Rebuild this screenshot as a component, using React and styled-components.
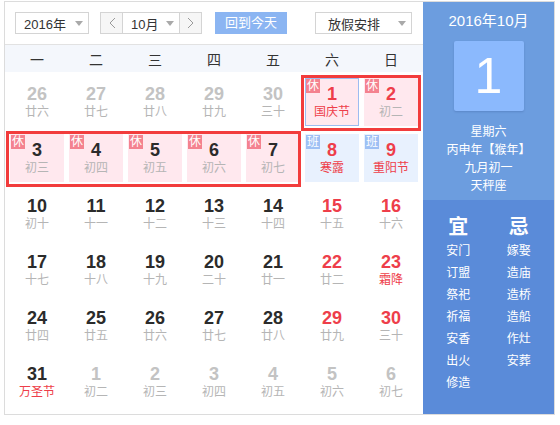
import React from 'react';
import styled, { createGlobalStyle } from 'styled-components';

const GlobalStyle = createGlobalStyle`
  html, body {
    margin: 0;
    padding: 0;
    background: #fff;
  }
  body {
    font-family: "Liberation Sans", "Noto Sans CJK SC", sans-serif;
  }
`;

const CJK = `"Liberation Sans", "Noto Sans CJK SC", sans-serif`;

const weekNames = ['一', '二', '三', '四', '五', '六', '日'];

const festivals = ['国庆节', '寒露', '重阳节', '霜降', '万圣节'];

// [day, lunar text, kind] kind: o = other month, rest = 休, work = 班
const days = [
  [26, '廿六', 'o'], [27, '廿七', 'o'], [28, '廿八', 'o'], [29, '廿九', 'o'], [30, '三十', 'o'], [1, '国庆节', 'rest'], [2, '初二', 'rest'],
  [3, '初三', 'rest'], [4, '初四', 'rest'], [5, '初五', 'rest'], [6, '初六', 'rest'], [7, '初七', 'rest'], [8, '寒露', 'work'], [9, '重阳节', 'work'],
  [10, '初十'], [11, '十一'], [12, '十二'], [13, '十三'], [14, '十四'], [15, '十五'], [16, '十六'],
  [17, '十七'], [18, '十八'], [19, '十九'], [20, '二十'], [21, '廿一'], [22, '廿二'], [23, '霜降'],
  [24, '廿四'], [25, '廿五'], [26, '廿六'], [27, '廿七'], [28, '廿八'], [29, '廿九'], [30, '三十'],
  [31, '万圣节'], [1, '初二', 'o'], [2, '初三', 'o'], [3, '初四', 'o'], [4, '初五', 'o'], [5, '初六', 'o'], [6, '初七', 'o'],
];

const frames = [
  { row: 1, from: 6, to: 8, right: -3 },
  { row: 2, from: 1, to: 6, right: -1 },
];

const suitable = ['安门', '订盟', '祭祀', '祈福', '安香', '出火', '修造'];
const avoid = ['嫁娶', '造庙', '造桥', '造船', '作灶', '安葬'];

const Widget = styled.div`
  margin: 1px 0 0 4px;
  width: 551px;
  height: 414px;
  box-sizing: border-box;
  border: 1px solid #dcdcdc;
  display: flex;
`;

const Main = styled.div`
  width: 418px;
  display: flex;
  flex-direction: column;
`;

const Toolbar = styled.div`
  height: 42px;
  border-bottom: 1px solid #e2e2e2;
  display: flex;
  align-items: center;
  padding-left: 10px;
`;

const Select = styled.div`
  width: ${(p) => p.$width}px;
  height: 22px;
  box-sizing: border-box;
  border: 1px solid #d4d4d4;
  margin-left: ${(p) => p.$gap || 0}px;
  padding: 0 5px 0 ${(p) => p.$pad || 8}px;
  display: flex;
  align-items: center;
  justify-content: space-between;
  font-family: ${CJK};
  font-size: 13px;
  color: #333;
  background: #fff;
`;

const Caret = styled.span`
  width: 0;
  height: 0;
  border-left: 4px solid transparent;
  border-right: 4px solid transparent;
  border-top: 5px solid #a9a9a9;
`;

const MonthGroup = styled.div`
  margin-left: 11px;
  height: 22px;
  box-sizing: border-box;
  border: 1px solid #d4d4d4;
  display: flex;
`;

const NavButton = styled.div`
  width: 21px;
  background: #f6f6f6;
  display: flex;
  align-items: center;
  justify-content: center;
`;

const MonthSelect = styled(Select)`
  height: 20px;
  border-width: 0 1px;
`;

const TodayButton = styled.div`
  margin-left: 13px;
  width: 72px;
  height: 22px;
  background: #8bb5f2;
  color: #fff;
  font-family: ${CJK};
  font-size: 13px;
  line-height: 22px;
  text-align: center;
`;

const WeekHeader = styled.div`
  height: 27px;
  background: #f4f7fc;
  display: grid;
  grid-template-columns: repeat(7, 54px);
  column-gap: 5px;
  padding: 0 5px;
  align-items: center;
  text-align: center;
  font-family: ${CJK};
  font-size: 14px;
  color: #333;
`;

const DayGrid = styled.div`
  display: grid;
  grid-template-columns: repeat(7, 54px);
  grid-auto-rows: 48px;
  column-gap: 5px;
  row-gap: 8px;
  padding: 6px 5px 8px;
`;

const cellBg = { rest: '#ffe8ee', work: '#e8f1fe' };
const badgeBg = { rest: '#f4828f', work: '#9ec0f4' };

const Cell = styled.div`
  position: relative;
  grid-row: ${(p) => p.$row};
  grid-column: ${(p) => p.$col};
  box-sizing: border-box;
  border: 1px solid ${(p) => (p.$selected ? '#9dbcf0' : 'transparent')};
  background: ${(p) => cellBg[p.$kind] || 'transparent'};
  padding-top: 5px;
  text-align: center;
`;

const DayNum = styled.div`
  font-family: "Liberation Sans", Arial, sans-serif;
  font-weight: bold;
  font-size: 18px;
  line-height: 20px;
  color: ${(p) => p.$color};
`;

const Lunar = styled.div`
  font-family: ${CJK};
  font-size: 12px;
  line-height: 16px;
  color: ${(p) => (p.$festival ? '#ee3e4a' : '#b5b5b5')};
`;

const Badge = styled.span`
  position: absolute;
  top: 0;
  left: 0;
  width: 14px;
  height: 14px;
  background: ${(p) => badgeBg[p.$kind]};
  color: #fff;
  font-family: ${CJK};
  font-size: 12px;
  line-height: 14px;
  text-align: center;
`;

const HolidayFrame = styled.div`
  grid-row: ${(p) => p.$row};
  grid-column: ${(p) => p.$from} / ${(p) => p.$to};
  margin: -3px ${(p) => p.$right}px -5px -4px;
  border: 3px solid #f23c3c;
  z-index: 2;
  pointer-events: none;
`;

const Panel = styled.div`
  width: 131px;
  display: flex;
  flex-direction: column;
  color: #fff;
  font-family: ${CJK};
`;

const PanelTop = styled.div`
  background: #6c9ddf;
  padding: 8px 0 5px;
  text-align: center;
`;

const MonthTitle = styled.div`
  font-size: 15px;
  line-height: 22px;
`;

const TodayBox = styled.div`
  width: 70px;
  height: 70px;
  margin: 9px auto 12px;
  background: #8bb9fd;
  border-radius: 2px;
  box-shadow: 0 1px 2px rgba(40, 70, 130, 0.25);
  font-family: "Liberation Sans", Arial, sans-serif;
  font-size: 50px;
  line-height: 70px;
`;

const InfoLine = styled.div`
  font-size: 12px;
  line-height: 18px;
`;

const PanelBottom = styled.div`
  flex: 1;
  background: #5a8bd9;
  display: grid;
  grid-template-columns: 1fr 1fr;
  align-content: start;
  padding: 14px 5px 0;
`;

const AdviceColumn = styled.div`
  text-align: center;
`;

const AdviceHead = styled.div`
  font-size: 20px;
  font-weight: bold;
  line-height: 26px;
`;

const AdviceItem = styled.div`
  font-size: 12px;
  line-height: 22px;
`;

const Chevron = ({ dir }) => (
  <svg width="8" height="12" viewBox="0 0 8 12">
    <polyline
      points={dir === 'left' ? '7,1 2,6 7,11' : '1,1 6,6 1,11'}
      fill="none"
      stroke="#9a9a9a"
      strokeWidth="1"
    />
  </svg>
);

const numColor = (kind, weekend) => {
  if (kind === 'o') return '#c3c3c3';
  if (weekend) return '#ee3e4a';
  return '#2b2b2b';
};

const App = () => {
  return (
    <>
      <GlobalStyle />
      <Widget>
        <Main>
          <Toolbar>
            <Select $width={74}>
              2016年
              <Caret />
            </Select>
            <MonthGroup>
              <NavButton>
                <Chevron dir="left" />
              </NavButton>
              <MonthSelect $width={58}>
                10月
                <Caret />
              </MonthSelect>
              <NavButton>
                <Chevron dir="right" />
              </NavButton>
            </MonthGroup>
            <TodayButton>回到今天</TodayButton>
            <Select $width={97} $gap={28} $pad={12}>
              放假安排
              <Caret />
            </Select>
          </Toolbar>
          <WeekHeader>
            {weekNames.map((w) => (
              <span key={w}>{w}</span>
            ))}
          </WeekHeader>
          <DayGrid>
            {days.map(([d, lunar, kind], i) => {
              const col = (i % 7) + 1;
              const row = Math.floor(i / 7) + 1;
              const flag = kind === 'rest' ? '休' : kind === 'work' ? '班' : null;
              return (
                <Cell
                  key={i}
                  $row={row}
                  $col={col}
                  $kind={kind}
                  $selected={kind !== 'o' && d === 1}
                >
                  {flag && <Badge $kind={kind}>{flag}</Badge>}
                  <DayNum $color={numColor(kind, col >= 6)}>{d}</DayNum>
                  <Lunar $festival={festivals.includes(lunar)}>{lunar}</Lunar>
                </Cell>
              );
            })}
            {frames.map((f) => (
              <HolidayFrame key={f.row} $row={f.row} $from={f.from} $to={f.to} $right={f.right} />
            ))}
          </DayGrid>
        </Main>
        <Panel>
          <PanelTop>
            <MonthTitle>2016年10月</MonthTitle>
            <TodayBox>1</TodayBox>
            <InfoLine>星期六</InfoLine>
            <InfoLine>丙申年【猴年】</InfoLine>
            <InfoLine>九月初一</InfoLine>
            <InfoLine>天秤座</InfoLine>
          </PanelTop>
          <PanelBottom>
            <AdviceColumn>
              <AdviceHead>宜</AdviceHead>
              {suitable.map((s) => (
                <AdviceItem key={s}>{s}</AdviceItem>
              ))}
            </AdviceColumn>
            <AdviceColumn>
              <AdviceHead>忌</AdviceHead>
              {avoid.map((s) => (
                <AdviceItem key={s}>{s}</AdviceItem>
              ))}
            </AdviceColumn>
          </PanelBottom>
        </Panel>
      </Widget>
    </>
  );
};

export default App;
